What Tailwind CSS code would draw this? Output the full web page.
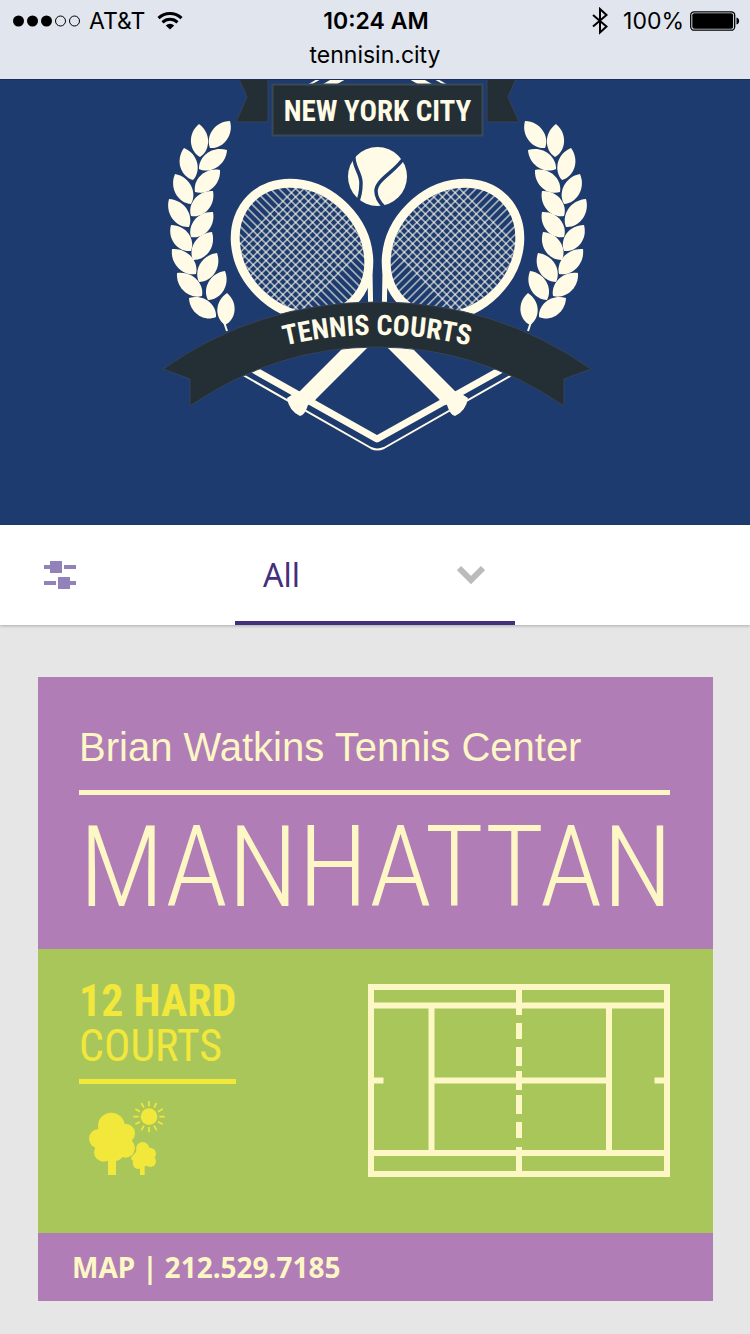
<!DOCTYPE html>
<html lang="en">
<head>
<meta charset="utf-8">
<meta name="viewport" content="width=device-width, initial-scale=1">
<title>Tennis in the City</title>
<script src="https://cdn.jsdelivr.net/npm/@tailwindcss/browser@4"></script>
</head>
<body class="min-h-screen bg-[#e6e6e6] font-['Inter',sans-serif]">

<header class="border-b border-[#1b2d52] bg-[#e0e5ee] text-black">
  <div class="grid h-[41px] grid-cols-3 items-center pl-3 pr-2.5 text-[23px] leading-10">
    <div class="flex items-center gap-2">
      <svg class="h-3 w-[69px]" viewBox="0 0 69 12" aria-hidden="true">
        <g><circle cx="6.500" cy="6" r="5.500"/><circle cx="20.500" cy="6" r="5.500"/><circle cx="34.500" cy="6" r="5.500"/></g>
        <g fill="none" stroke="#000"><circle cx="48.500" cy="6" r="5"/><circle cx="62.500" cy="6" r="5"/></g>
      </svg>
      <span>AT&amp;T</span>
      <svg class="ml-1 h-[18px] w-[26px]" viewBox="0 0 26 18" fill="none" stroke="#000" stroke-width="3" aria-hidden="true">
        <path d="M1.500 6.200A16.500 16.500 0 0 1 24.500 6.200"/><path d="M5.500 10.400A10.800 10.800 0 0 1 20.500 10.400"/>
        <path d="M8.800 13.400A6 6 0 0 1 17.200 13.400L13 17.600Z" fill="#000" stroke="none"/>
      </svg>
    </div>
    <time class="text-center font-semibold">10:24 AM</time>
    <div class="flex items-center justify-end gap-1.5">
      <svg class="mr-2 h-7 w-[18px]" viewBox="0 0 18 28" fill="none" stroke="#000" stroke-width="2" aria-hidden="true"><path d="M2 8L15.500 19.500L9 25.500V2L15.500 8L2 19.500"/></svg>
      <span>100%</span>
      <svg class="h-5 w-[50px]" viewBox="0 0 50 20" aria-hidden="true">
        <rect x=".7" y=".8" width="44" height="18.400" rx="3.500" fill="none" stroke="#000" stroke-width="1.300"/><rect x="2.300" y="2.300" width="40.800" height="15.400" rx="2" />
        <path d="M46.500 6.500C50 7 50 13 46.500 13.500Z"/>
      </svg>
    </div>
  </div>
  <p class="h-[38px] text-center text-[23px] leading-[28px]">tennisin.city</p>
</header>

<section class="flex h-[445px] justify-center bg-[#1d3b6f]">
  <svg class="h-[381px] w-[450px]" viewBox="150 80 450 381" role="img" aria-label="New York City Tennis Courts">
    <defs>
      <clipPath id="head"><ellipse rx="69" ry="56"/></clipPath>
      <path id="arc" d="M227 364A400 400 0 0 1 527 364"/>
      <g id="half">
        <g fill="none" stroke="#fffbe6">
          <path d="M307 86L335 70" stroke-width="2"/>
          <path d="M323 88L355 70" stroke-width="7"/>
        </g>
        <path d="M239 79L247 97L236 122H268V79Z" fill="#242f35" stroke="#35425a"/>
        <g id="leaves" fill="#fffbe6"></g>
        <path d="M224 322L227 331" stroke="#fffbe6" stroke-width="2"/>
      </g>
      <g id="racket" stroke="#fffbe6">
        <g transform="translate(302 250) rotate(45)" fill="none">
          <g clip-path="url(#head)" stroke-opacity=".6" stroke-width="1.700">
            <path d="M-70-51H70M-70-45H70M-70-39H70M-70-33H70M-70-27H70M-70-21H70M-70-15H70M-70-9H70M-70-3H70M-70 3H70M-70 9H70M-70 15H70M-70 21H70M-70 27H70M-70 33H70M-70 39H70M-70 45H70M-70 51H70"/>
            <path d="M-48-60V60M-42-60V60M-36-60V60M-30-60V60M-24-60V60M-18-60V60M-12-60V60M-6-60V60M0-60V60M6-60V60M12-60V60M18-60V60M24-60V60M30-60V60M36-60V60M42-60V60"/>
          </g>
          <ellipse rx="72.500" ry="60.500" stroke-width="9"/>
          <path d="M58-38L87-10M58 38L87 10" stroke-width="5"/>
          <path d="M88 0H211" stroke-width="17"/>
        </g>
        <path d="M457 391L468 398Q466 411 455 416Q450 415 447 405L439 399Z" fill="#fffbe6" stroke="none"/>
      </g>
    </defs>

    <use href="#half"/>
    <use href="#half" transform="matrix(-1 0 0 1 755 0)"/>
    <rect x="272.500" y="84.500" width="210" height="51" fill="#242f35" stroke="#3b4956" stroke-width="2"/>
    <text x="377.500" y="121" text-anchor="middle" class="fill-[#fffbe6] font-['Roboto_Condensed','Liberation_Sans_Narrow',sans-serif] text-[29px] font-bold">NEW YORK CITY</text>

    <circle cx="377.500" cy="176.500" r="29.500" fill="#fffbe6"/>
    <g fill="none" stroke="#1d3b6f" stroke-width="3.500">
      <path d="M354 153C352 166 361 172 361 183C361 191 360 197 357 203"/>
      <path d="M405 156C397 171 376 179 376 191C376 197 379 202 384 207"/>
    </g>

    <g fill="none" stroke="#fffbe6" stroke-linejoin="round">
      <path d="M240 362L377 439L515 362" stroke-width="7"/>
      <path d="M236 371L371 448Q377 451 384 448L519 371" stroke-width="2"/>
    </g>
    <use href="#racket"/>
    <use href="#racket" transform="matrix(-1 0 0 1 755 0)"/>

    <path d="M163 369Q258 302 377 302Q496 302 591 369L564 379V406Q478 347 377 347Q276 347 190 406V379Z" fill="#242f35" stroke="#35425a"/>
    <text text-anchor="middle" class="fill-[#fffbe6] font-['Roboto_Condensed','Liberation_Sans_Narrow',sans-serif] text-[28px] font-bold"><textPath href="#arc" startOffset="50%">TENNIS COURTS</textPath></text>
  </svg>
</section>

<nav class="relative grid h-[100px] grid-cols-[235px_1fr_235px] bg-white shadow-[0_1px_3px_rgba(0,0,0,0.25)]">
  <button type="button" aria-label="Filters" class="flex items-center pl-11">
    <svg class="h-7 w-8" viewBox="0 0 32 28" fill="#9183b9" aria-hidden="true"><path d="M0 4H6V0H18V12H6V8H0ZM20 4H32V8H20ZM0 20H12V24H0ZM14 16H26V20H32V24H26V28H14Z"/></svg>
  </button>
  <div class="relative border-b-4 border-[#432f7c]">
    <label for="borough" class="sr-only">Borough</label>
    <select id="borough" class="h-full w-full appearance-none bg-transparent pl-7 pt-1 font-['Noto_Sans',sans-serif] text-[32px] text-[#432f7c]">
      <option>All</option><option>Manhattan</option><option>Brooklyn</option><option>Queens</option><option>Bronx</option><option>Staten Island</option>
    </select>
    <svg class="pointer-events-none absolute right-[30px] top-10 h-5 w-7" viewBox="0 0 28 20" fill="none" stroke="#bbb" stroke-width="6" aria-hidden="true"><path d="M2 3L14 15L26 3"/></svg>
  </div>
</nav>

<main class="pb-[33px] pl-[38px] pr-[37px] pt-[52px]">
  <article class="bg-[#b07db6] text-[#fcf7c5]">
    <div class="flex h-[272px] flex-col pl-[41px] pr-[43px] pt-[45px]">
      <h2 class="whitespace-nowrap font-['Liberation_Sans',sans-serif] text-[40px] leading-[50px]">Brian Watkins Tennis Center</h2>
      <div class="mt-[18px] h-[5px] bg-[#fcf7c5]"></div>
      <p class="mt-[10px] whitespace-nowrap font-['Roboto_Condensed','Liberation_Sans_Narrow',sans-serif] text-[114px] font-[340] leading-[124px]">MANHATTAN</p>
    </div>
    <div class="flex h-[284px] justify-between bg-[#a9c65b] pl-[41px] pr-[43px] pt-[30px] text-[#f2e73b]">
      <div class="w-[157px]">
        <p class="whitespace-nowrap font-['Roboto_Condensed','Liberation_Sans_Narrow',sans-serif] text-[44px] leading-[45px]"><strong class="font-bold">12 HARD</strong><br>COURTS</p>
        <div class="mt-[10px] h-[5px] bg-[#f2e73b]"></div>
        <svg class="-ml-2 mt-1.5 h-[95px] w-[110px]" viewBox="0 0 330 285" fill="#f2e73b" role="img" aria-label="Outdoor courts in a park">
          <circle cx="121" cy="108" r="40"/><circle cx="163" cy="130" r="29"/><circle cx="83" cy="146" r="29"/><circle cx="163" cy="174" r="29"/><circle cx="98" cy="186" r="29"/><circle cx="128" cy="180" r="34"/><circle cx="125" cy="145" r="40"/><path d="M111 195H135V255H111Z"/>
          <g><circle cx="215" cy="176" r="20"/><circle cx="237" cy="191" r="18"/><circle cx="238" cy="214" r="17"/><circle cx="202" cy="220" r="17"/><circle cx="192" cy="202" r="12"/><circle cx="215" cy="203" r="27"/><path d="M207 225H221V255H207Z"/></g>
          <path d="M187 150Q201 178 186 195Q182 202 172 205" fill="none" stroke="#a9c65b" stroke-width="3"/>
          <circle cx="234" cy="80" r="25"/>
          <path d="M234 33V49M234 111V127M187 80H203M265 80H281M211 39L219 53M249 107L257 121M193 57L207 65M261 95L275 103M193 103L207 95M261 65L275 57M211 121L219 107M249 53L257 39" stroke="#f2e73b" stroke-width="5"/>
        </svg>
      </div>
      <svg class="mt-[5px] h-[193px] w-[302px]" viewBox="0 0 302 193" fill="none" stroke="#fcf7c5" stroke-width="6" role="img" aria-label="Tennis court">
        <path d="M3 3H299V190H3ZM3 21.500H299M3 169H299M63.500 21V169M241 21V169M63 96.500H241M3 96.500H15.500M286.500 96.500H299"/>
        <path d="M151 0V31M151 39V55M151 63V82M151 87V106M151 111V130M151 138V154M151 163V193"/>
      </svg>
    </div>
    <footer class="flex h-[68px] items-center gap-[7px] pl-[34px] font-['Noto_Sans',sans-serif] text-[28px] font-bold">
      <a href="#map">MAP</a><span>|</span><a href="tel:2125297185">212.529.7185</a>
    </footer>
  </article>
</main>

<script>
  // Laurel leaves: [base x, base y, tip x, tip y]
  const leaves = [
    [200,157,199,124],[193,180,184,148],[191,204,175,174],[189,227,169,199],[191,251,171,225],[196,274,172,249],[202,296,177,273],[216,317,189,298],
    [210,148,230,121],[199,169,227,150],[195,192,220,170],[191,216,213,191],[191,237,213,212],[193,260,212,232],[199,282,217,253],[208,300,225,271],[225,325,227,293]
  ];
  const group = document.getElementById('leaves');
  for (const [bx, by, tx, ty] of leaves) {
    const dx = tx - bx, dy = ty - by, len = Math.hypot(dx, dy), nx = -dy / len, ny = dx / len;
    const at = (t, w) => `${bx + dx * t + nx * w} ${by + dy * t + ny * w}`;
    const leaf = document.createElementNS('http://www.w3.org/2000/svg', 'path');
    leaf.setAttribute('d', `M${at(0, 0)}C${at(.2, 11)} ${at(.72, 12)} ${at(1, 0)}C${at(.72, -12)} ${at(.2, -11)} ${at(0, 0)}Z`);
    group.append(leaf);
  }
</script>
</body>
</html>
